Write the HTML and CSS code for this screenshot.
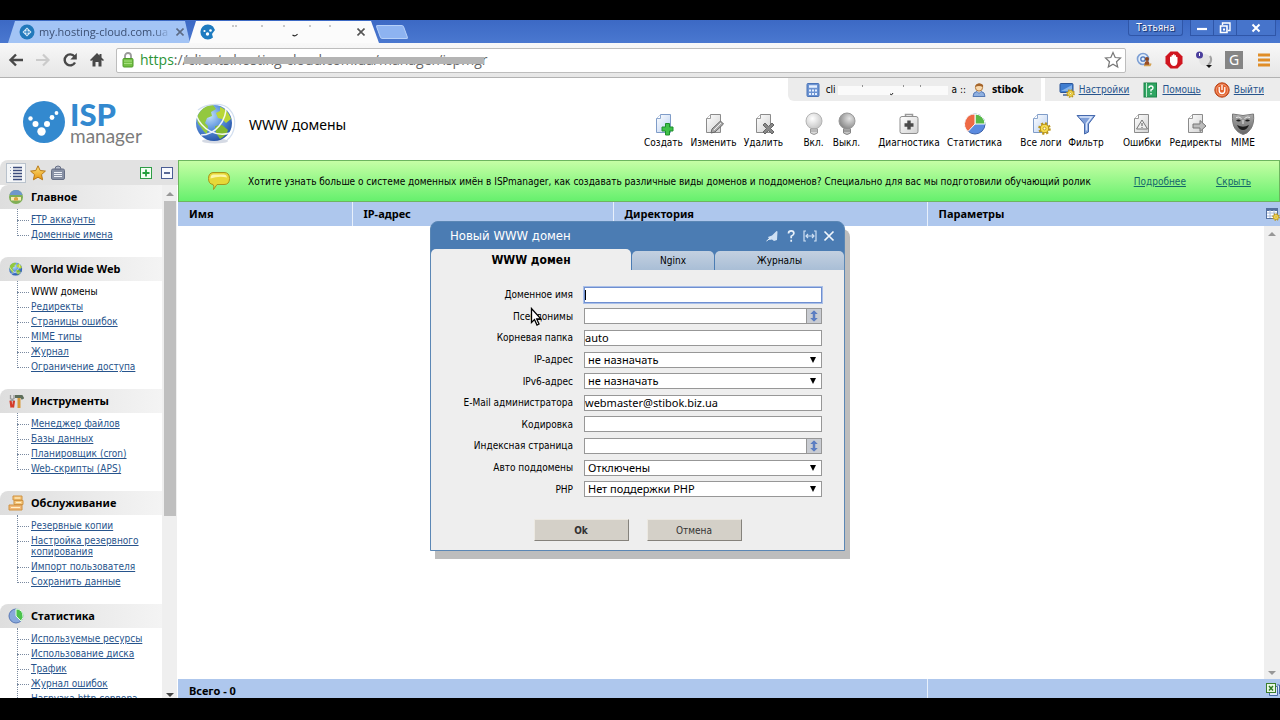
FILE: index.html
```html
<!DOCTYPE html>
<html lang="ru">
<head>
<meta charset="utf-8">
<title>ISPmanager — WWW домены</title>
<link rel="stylesheet" href="styles.css">
</head>
<body>
<svg class="defs" aria-hidden="true">
  <defs>
    <linearGradient id="gPage" x1="0" y1="0" x2="1" y2="1"><stop offset="0" stop-color="#fff"/><stop offset="1" stop-color="#d2d2d2"/></linearGradient>
    <linearGradient id="gPageBlue" x1="0" y1="0" x2="1" y2="1"><stop offset="0" stop-color="#fff"/><stop offset="1" stop-color="#b9cff0"/></linearGradient>
    <radialGradient id="gGlobe" cx=".38" cy=".3" r=".75"><stop offset="0" stop-color="#c4e2fa"/><stop offset=".5" stop-color="#5b92dd"/><stop offset="1" stop-color="#2350a4"/></radialGradient>
    <radialGradient id="gOn" cx=".4" cy=".35" r=".7"><stop offset="0" stop-color="#fff"/><stop offset="1" stop-color="#c2c2c2"/></radialGradient>
    <radialGradient id="gOff" cx=".65" cy=".35" r=".8"><stop offset="0" stop-color="#e4e4e4"/><stop offset="1" stop-color="#777"/></radialGradient>
    <linearGradient id="gMask" x1="0" y1="0" x2="0" y2="1"><stop offset="0" stop-color="#aaa"/><stop offset="1" stop-color="#666"/></linearGradient>
    <linearGradient id="gGold" x1="0" y1="0" x2="0" y2="1"><stop offset="0" stop-color="#fbe27c"/><stop offset="1" stop-color="#e8960f"/></linearGradient>
    <symbol id="page" viewBox="0 0 24 24"><path d="M4.500 6.500l4-4h10v18h-14z" fill="url(#gPage)" stroke="#8b8b8b"/><path d="M8.500 2.500v4h-4" fill="#fff" stroke="#9a9a9a"/></symbol>
    <symbol id="pageBlue" viewBox="0 0 24 24"><path d="M4.500 6.500l4-4h10v18h-14z" fill="url(#gPageBlue)" stroke="#7f9cc8"/><path d="M8.500 2.500v4h-4" fill="#fff" stroke="#8ea8cf"/></symbol>
    <symbol id="gear" viewBox="0 0 12 12"><circle cx="6" cy="6" r="4.600" fill="none" stroke="#b9941b" stroke-width="2.400" stroke-dasharray="1.900 1.700"/><circle cx="6" cy="6" r="3.900" fill="#f6dc50" stroke="#b9941b"/><circle cx="6" cy="6" r="1.300" fill="#fffbe0" stroke="#b9941b" stroke-width=".8"/></symbol>
    <symbol id="globe" viewBox="0 0 44 44"><ellipse cx="22" cy="40" rx="13" ry="2.500" fill="#d5dae4"/><circle cx="21" cy="22" r="18" fill="url(#gGlobe)"/><path d="M5 14c4-7 9-10 15-10l3 4-5 3 1 4-5 2-2 5 3 3-1 8c-3-1-5-6-8-9-2-2-2-6-1-10z" fill="#93c83f"/><path d="M27 6c6 2 9 6 11 12l-5 4-4-4-4-1-2-5 4-2z" fill="#b9d636"/><path d="M22 25l7-1 6 5c-1 4-4 7-8 9l-4-6z" fill="#83b930"/><path d="M3 14c6 15 20 22 34 18M8 34C22 34 34 20 33 4" fill="none" stroke="#fff" stroke-width="1.500" opacity=".9"/><path d="M5 9C14 2 31 1 37 9c8 9 5 24-3 30" fill="none" stroke="#d3dff0" stroke-width="1.200"/></symbol>
    <symbol id="multi" viewBox="0 0 12 14"><path d="M6 0l4.500 4.500H7.500v5h3L6 14 1.500 9.500h3v-5h-3z" fill="#5d7ec2"/></symbol>
  </defs>
</svg>

<div class="screen">
  <header class="browser">
    <div class="tabstrip">
      <div class="btab">
        <svg class="i16" viewBox="0 0 16 16"><circle cx="8" cy="8" r="7.500" fill="#2179bb"/><path d="M8 3.500l4.500 4.500L8 12.500 3.500 8z" fill="#d9ecfa"/><path d="M8 5v6M5 8h6" stroke="#2179bb"/></svg>
        <span class="btab-title">my.hosting-cloud.com.ua</span>
        <button class="btab-close" aria-label="Закрыть вкладку"><svg viewBox="0 0 8 8"><path d="M.5.5l7 7m0-7l-7 7" stroke="#5c6b85" stroke-width="1.600"/></svg></button>
      </div>
      <div class="btab btab-active">
        <svg class="i16" viewBox="0 0 16 16"><path d="M13 2.500A7.500 7.500 0 1 0 13 13.500L12 10l3-4z" fill="#1f7cc0"/><circle cx="4.500" cy="7" r="1.100" fill="#fff"/><circle cx="7.500" cy="10" r="1.700" fill="#fff"/><circle cx="10.500" cy="6.500" r="1.300" fill="#fff"/></svg>
        <svg class="specks" viewBox="0 0 110 16"><path d="M1 2h1M4 2h1M30 2h1M52 2h1M78 2h1M98 2h1" stroke="#333"/><path d="M61 11q3 2 5-1" stroke="#222" fill="none" stroke-width="1.200"/></svg>
        <button class="btab-close" aria-label="Закрыть вкладку"><svg viewBox="0 0 8 8"><path d="M.5.5l7 7m0-7l-7 7" stroke="#555" stroke-width="1.600"/></svg></button>
      </div>
      <button class="newtab" aria-label="Новая вкладка"></button>
      <div class="winbtns">
        <button class="user">Татьяна</button>
        <div class="wingroup">
          <button aria-label="Свернуть"><svg viewBox="0 0 12 12"><path d="M1 7h10" stroke="#fff" stroke-width="2.200"/></svg></button>
          <button aria-label="Развернуть"><svg viewBox="0 0 12 12"><path d="M3.500 3V1h7.500v7.500H9" fill="none" stroke="#fff" stroke-width="1.400"/><path d="M1.500 4h6.500v6.500H1.500z" fill="none" stroke="#fff" stroke-width="1.600"/><path d="M4 6.500h2v2H4z" fill="#fff"/></svg></button>
          <button class="wide" aria-label="Закрыть"><svg viewBox="0 0 12 12"><path d="M2.500 2.500l7 7m0-7l-7 7" stroke="#fff" stroke-width="2"/></svg></button>
        </div>
      </div>
    </div>
    <div class="toolbar">
      <button class="tb" aria-label="Назад"><svg viewBox="0 0 16 16"><path d="M15 8H3M8 2.500L2.500 8 8 13.500" fill="none" stroke="#484848" stroke-width="2.400"/></svg></button>
      <button class="tb" aria-label="Вперёд"><svg viewBox="0 0 16 16"><path d="M1 8h12M8 2.500L13.500 8 8 13.500" fill="none" stroke="#cbcbcb" stroke-width="2.200"/></svg></button>
      <button class="tb" aria-label="Обновить"><svg viewBox="0 0 16 16"><path d="M13 10.500A5.500 5.500 0 1 1 12.500 4.500" fill="none" stroke="#484848" stroke-width="2.400"/><path d="M14.800 1v6.500H8.300z" fill="#484848"/></svg></button>
      <button class="tb" aria-label="Домой"><svg viewBox="0 0 16 16"><path d="M8 1L1 8l1 1 1.500-1v6.500h3V10h3v4.500h3V8L14 9l1-1-2.500-2.500V2h-2v1.500z" fill="#484848"/></svg></button>
      <div class="omnibox">
        <svg class="lock" viewBox="0 0 12 16"><path d="M3 7V4a3 3 0 0 1 6 0v3" fill="none" stroke="#9a9a9a" stroke-width="1.800"/><rect x="1" y="6.500" width="10" height="8.500" rx="1" fill="#74c045" stroke="#4f9b2b"/><path d="M2 9h8M2 11.500h8" stroke="#a5df7e"/></svg>
        <span class="scheme">https</span><input class="url" aria-label="Адрес" value="://clients.hosting-cloud.com.ua/manager/ispmgr">
        <span class="strike"></span>
        <svg class="star" viewBox="0 0 18 18"><path d="M9 1.500l2.200 5 5.300.5-4 3.700 1.200 5.300L9 13.200 4.300 16l1.200-5.300-4-3.700 5.300-.5z" fill="#fff" stroke="#777" stroke-width="1.200"/></svg>
      </div>
      <div class="exts">
        <svg viewBox="0 0 18 18"><circle cx="8" cy="8" r="5.500" fill="#e5effa" stroke="#7d9fd4" stroke-width="1.600"/><circle cx="8" cy="8" r="2.200" fill="none" stroke="#4d77bd" stroke-width="1.300"/><circle cx="12" cy="8" r="2" fill="#8a4520"/><path d="M9.500 14q0-4 2.500-4t2.500 4z" fill="#9b4d22"/><path d="M9 14.500h6l1-2" stroke="#d4a050" stroke-width="1.500" fill="none"/></svg>
        <svg viewBox="0 0 18 18"><path d="M5.500.5h7l5 5v7l-5 5h-7l-5-5v-7z" fill="#d0151f"/><path d="M5 9V6q1-1 1.500 0V4.500q1-1 1.500 0V3.500q1-1 1.500 0v1q1-1 1.500 0v1.500q1.500-.5 1.500.5V11q-.5 4-3.500 4T5 11z" fill="#fff"/></svg>
        <svg viewBox="0 0 18 18"><circle cx="10" cy="9" r="6" fill="#e3e3e3"/><path d="M15 5q3 5-2 9" stroke="#a3a3a3" stroke-width="2" fill="none"/><circle cx="4.500" cy="4" r="3.500" fill="#4b3f9d"/><path d="M4.500 2v3" stroke="#fff"/><path d="M11 14h6l-3 3z" fill="#111"/></svg>
        <span class="gext">G</span>
        <svg viewBox="0 0 18 18"><path d="M3 4h12M3 9h12M3 14h12" stroke="#e08d27" stroke-width="3"/></svg>
      </div>
    </div>
  </header>

  <div class="app">
    <div class="userbar">
      <div class="ubox ubox-user">
        <svg class="i14" viewBox="0 0 14 14"><rect x="1" y=".5" width="12" height="13" rx="1" fill="#6d94d2" stroke="#4a74b8"/><path d="M3 3.500h8" stroke="#e6f0ff" stroke-width="2.500"/><path d="M3 7.500h8M3 11h8" stroke="#e6f0ff" stroke-width="1.800" stroke-dasharray="2 1"/></svg>
        <span>cli</span>
        <svg class="redact" viewBox="0 0 112 14"><path d="M0 3h110v9H0z" fill="#fafafa"/><path d="M24 3h1M65 3h1M82 3h1" stroke="#333"/><path d="M52 11q2 2 3-1" stroke="#222" fill="none"/></svg>
        <span>a ::</span>
        <svg class="i14" viewBox="0 0 14 14"><circle cx="7" cy="4.500" r="3.600" fill="#f8d9ae" stroke="#b47a3b"/><path d="M3 4q1-4 5-3.500T11 4Q7 2 3 4z" fill="#a5652a"/><path d="M1 13.500q0-4.500 4-5l2 2 2-2q4 .5 4 5z" fill="#8fb0e0" stroke="#5579b5"/></svg>
        <b>stibok</b>
      </div>
      <nav class="ubox ubox-links">
        <a href="#"><svg class="i16" viewBox="0 0 16 16"><rect x="1" y="1.500" width="13" height="9" rx="1" fill="#3f7dd0" stroke="#2c5596"/><path d="M2 9L13 3v6z" fill="#83b2ea"/><path d="M4 13h6" stroke="#6e86ad" stroke-width="2"/><use href="#gear" x="7" y="7" width="9" height="9"/></svg><span>Настройки</span></a>
        <a href="#"><svg class="i16" viewBox="0 0 16 16"><rect x="2" y="1" width="12.500" height="14" fill="#2fa562" stroke="#1c8348"/><path d="M4.500 1v14" stroke="#bfead0"/><path d="M7 6q0-2 2-2t2 2q0 1.200-2 2v1.500M9 11v1.500" stroke="#fff" stroke-width="1.400" fill="none"/></svg><span>Помощь</span></a>
        <a href="#"><svg class="i16" viewBox="0 0 16 16"><circle cx="8" cy="8" r="7.200" fill="#e3612d" stroke="#b5451c"/><circle cx="8" cy="8" r="5.700" fill="none" stroke="#f3a27d" stroke-width=".8"/><path d="M5.200 5v3.500q0 3 2.800 3t2.800-3V5M8 3v5" stroke="#fff" stroke-width="1.300" fill="none"/></svg><span>Выйти</span></a>
      </nav>
    </div>

    <div class="masthead">
      <div class="logo">
        <svg viewBox="0 0 42 42"><circle cx="21" cy="21" r="21" fill="#3389cf"/><g fill="#fff"><circle cx="7.500" cy="17.500" r="2.200"/><circle cx="12.500" cy="23" r="3"/><circle cx="18.500" cy="30.500" r="4.200"/><circle cx="24" cy="23" r="3"/><circle cx="29" cy="16.500" r="2.400"/><circle cx="33.500" cy="12" r="1.900"/></g></svg>
        <div class="logo-text"><b>ISP</b><span>manager</span></div>
      </div>
      <svg class="bigglobe"><use href="#globe"/></svg>
      <h1>WWW домены</h1>
      <div class="actions">
        <div class="agroup g1">
          <button><svg viewBox="0 0 24 24"><use href="#pageBlue"/><path d="M13.500 11.500h4v3.500H21v4h-3.500V23h-4v-4H10v-4h3.500z" fill="#3fc148" stroke="#1e8f2c"/></svg>Создать</button>
          <button><svg viewBox="0 0 24 24"><use href="#page"/><path d="M9 21l1-4 8.500-8 3 3-8.500 8z" fill="#aaa" stroke="#666"/><path d="M12 18l7-7" stroke="#eee"/></svg>Изменить</button>
          <button><svg viewBox="0 0 24 24"><use href="#page"/><path d="M11 13l2-2 3.500 3.500L20 11l2 2-3.500 3.500L22 20l-2 2-3.500-3.500L13 22l-2-2 3.500-3.500z" fill="#888" stroke="#666"/></svg>Удалить</button>
        </div>
        <div class="agroup g2">
          <button><svg viewBox="0 0 24 24"><circle cx="12" cy="9" r="8" fill="url(#gOn)" stroke="#b4b4b4"/><path d="M8.500 17h7v4q-3.500 3-7 0z" fill="#d9d9d9" stroke="#9a9a9a"/><path d="M8.500 19h7" stroke="#9a9a9a"/></svg>Вкл.</button>
          <button><svg viewBox="0 0 24 24"><circle cx="12" cy="9" r="8" fill="url(#gOff)" stroke="#999"/><path d="M8.500 17h7v4q-3.500 3-7 0z" fill="#c4c4c4" stroke="#888"/><path d="M8.500 19h7" stroke="#777"/></svg>Выкл.</button>
        </div>
        <div class="agroup g3">
          <button><svg viewBox="0 0 24 24"><path d="M8.500 5V2.500h7V5" fill="none" stroke="#9a9a9a" stroke-width="1.500"/><rect x="3" y="4.500" width="18" height="17" rx="2" fill="url(#gPage)" stroke="#8f8f8f"/><path d="M12 8.500v9M7.500 13h9" stroke="#4a4a4a" stroke-width="3.400"/></svg>Диагностика</button>
          <button><svg viewBox="0 0 24 24"><circle cx="12" cy="12" r="10" fill="#5b8be0" stroke="#3c61a8"/><path d="M12 12V2a10 10 0 0 1 10 10z" fill="#58b947" stroke="#fff"/><path d="M12 12L5 19.500A10 10 0 0 1 12 2z" fill="#ee6a45" stroke="#fff"/></svg>Статистика</button>
        </div>
        <div class="agroup g4">
          <button><svg viewBox="0 0 24 24"><use href="#pageBlue"/><use href="#gear" x="9" y="10" width="13" height="13"/></svg>Все логи</button>
          <button><svg viewBox="0 0 24 24"><path d="M3 3.500h18l-6.500 8.500v8l-4 2V12z" fill="#7f9fd8" stroke="#4669ad"/><path d="M5.500 5h12l-5 6.500v7" fill="none" stroke="#dbe7fb" stroke-width="1.500"/></svg>Фильтр</button>
        </div>
        <div class="agroup g5">
          <button><svg viewBox="0 0 24 24"><use href="#page"/><path d="M12 8l5.500 9h-11z" fill="#eee" stroke="#777"/><path d="M12 11v3M12 15v1" stroke="#555"/></svg>Ошибки</button>
          <button><svg viewBox="0 0 24 24"><use href="#page"/><path d="M9 12h7V8.500l6 5.500-6 5.500V16H9z" fill="#bcbcbc" stroke="#777"/></svg>Редиректы</button>
          <button><svg viewBox="0 0 24 24"><path d="M1.500 2q10.500 3 21 0 1 9-2.500 14.500T12 22.500Q7 21 4 16.500T1.500 2z" fill="url(#gMask)" stroke="#777"/><path d="M5 8.500q3-2 5 .5-3 1-5-.5zM19 8.500q-3-2-5 .5 3 1 5-.5zM6 13q6 3.500 12 0-2 5-6 5t-6-5z" fill="#1d1d1d"/><path d="M5 5.500q3-1.500 5.500 1M19 5.500q-3-1.500-5.500 1M12 8v4" stroke="#e8e8e8" fill="none"/></svg>MIME</button>
        </div>
      </div>
    </div>

    <div class="body">
      <aside class="sidebar">
        <div class="sidetools">
          <button class="pressed" aria-label="Список"><svg class="i16" viewBox="0 0 16 16"><path d="M5 2.500h9M5 5.500h9M5 8.500h9M5 11.500h9M5 14.500h9" stroke="#3c4c7c" stroke-width="1.300"/><path d="M2 2.500h1M2 5.500h1M2 8.500h1M2 11.500h1" stroke="#8b9bbd"/></svg></button>
          <button aria-label="Избранное"><svg class="i16" viewBox="0 0 16 16"><path d="M8 .8l2.200 4.700 5.200.6-3.900 3.500 1.100 5.200L8 12.200l-4.600 2.600 1.100-5.200L.6 6.100l5.200-.6z" fill="url(#gGold)" stroke="#b97917"/></svg></button>
          <button aria-label="Задачи"><svg class="i16" viewBox="0 0 16 16"><rect x="1.500" y="4" width="13" height="10.500" rx="1.500" fill="#8790a4" stroke="#666f85"/><path d="M4 7.500h8M4 9.500h8M4 11.500h8" stroke="#eef1f7"/><path d="M5 4q0-3 3-3t3 3z" fill="#b9c0cf" stroke="#666f85"/></svg></button>
          <span class="push"></span>
          <button class="box plus" aria-label="Развернуть все"><svg viewBox="0 0 12 12"><rect x=".5" y=".5" width="11" height="11" fill="#f3fff3" stroke="#2e9c45"/><path d="M6 2.500v7M2.500 6h7" stroke="#23a03c" stroke-width="1.800"/></svg></button>
          <button class="box" aria-label="Свернуть все"><svg viewBox="0 0 12 12"><rect x=".5" y=".5" width="11" height="11" fill="#f8faff" stroke="#4a5d94"/><path d="M3 6h6" stroke="#33467d" stroke-width="1.600"/></svg></button>
        </div>
        <div class="sidescroll">
          <nav class="menu">
            <section>
              <h2><svg class="i16" viewBox="0 0 16 16"><circle cx="8" cy="8" r="7" fill="#7fae55"/><path d="M1.500 6Q3 1 8 1t6.500 5z" fill="#6f97cc"/><path d="M3 8h10v3.500H3z" fill="#f7ebb4"/><path d="M6 9q2-2 4 0v2.500H6z" fill="#d9a441"/></svg>Главное</h2>
              <ul><li><a href="#">FTP аккаунты</a></li><li><a href="#">Доменные имена</a></li></ul>
            </section>
            <section>
              <h2><svg class="i16"><use href="#globe"/></svg>World Wide Web</h2>
              <ul><li>WWW домены</li><li><a href="#">Редиректы</a></li><li><a href="#">Страницы ошибок</a></li><li><a href="#">MIME типы</a></li><li><a href="#">Журнал</a></li><li><a href="#">Ограничение доступа</a></li></ul>
            </section>
            <section>
              <h2><svg class="i16" viewBox="0 0 16 16"><path d="M2.500 7.500l1 7M6 7.500l-1 7" stroke="#d43b28" stroke-width="2.200"/><path d="M2.500 2v3.500l3.500 2M6 2v3.500l-3.500 2" stroke="#999" stroke-width="1.300" fill="none"/><path d="M11 5v10" stroke="#d89a3c" stroke-width="3"/><path d="M7 3.500h6.500l1.500 2.500" stroke="#5d6e5a" stroke-width="3" fill="none"/></svg>Инструменты</h2>
              <ul><li><a href="#">Менеджер файлов</a></li><li><a href="#">Базы данных</a></li><li><a href="#">Планировщик (cron)</a></li><li><a href="#">Web-скрипты (APS)</a></li></ul>
            </section>
            <section>
              <h2><svg class="i16" viewBox="0 0 16 16"><path d="M5 1h9v4H5zM6 5.500h9v4H6z" fill="#f6c77c" stroke="#cf9240"/><path d="M1 10h13v5H1z" fill="#f2b878" stroke="#cf9240"/><path d="M7 3h5M8 7.500h5M3 12.500h9" stroke="#fff0c8"/></svg>Обслуживание</h2>
              <ul><li><a href="#">Резервные копии</a></li><li class="two"><a href="#">Настройка резервного<br>копирования</a></li><li><a href="#">Импорт пользователя</a></li><li><a href="#">Сохранить данные</a></li></ul>
            </section>
            <section>
              <h2><svg class="i16" viewBox="0 0 16 16"><circle cx="8" cy="8" r="7" fill="#88a9dc" stroke="#5877b4"/><path d="M8 8V1a7 7 0 0 1 5 12z" fill="#4cc24c" stroke="#e6ffe6"/></svg>Статистика</h2>
              <ul><li><a href="#">Используемые ресурсы</a></li><li><a href="#">Использование диска</a></li><li><a href="#">Трафик</a></li><li><a href="#">Журнал ошибок</a></li><li><a href="#">Нагрузка http-сервера</a></li></ul>
            </section>
          </nav>
          <div class="vbar dark"><i class="up"></i><span class="thumb"></span><i class="down"></i></div>
        </div>
      </aside>

      <main>
        <div class="banner">
          <svg viewBox="0 0 24 20"><path d="M6 1.500h11q5.500 0 5.500 6t-5.500 6H10L6.500 18.500q1-3-.5-5-4.500-.5-4.500-6T6 1.500z" fill="#e6d838" stroke="#a8961c"/><path d="M6.500 3.500h10q3 0 3.500 3-8-2-16.500 1 0-4 3-4z" fill="#fbf6a6"/></svg>
          <p>Хотите узнать больше о системе доменных имён в ISPmanager, как создавать различные виды доменов и поддоменов? Специально для вас мы подготовили обучающий ролик</p>
          <a href="#">Подробнее</a>
          <a href="#">Скрыть</a>
        </div>
        <table class="cols">
          <colgroup><col class="c1"><col class="c2"><col class="c3"><col></colgroup>
          <thead><tr><th>Имя</th><th>IP-адрес</th><th>Директория</th><th><div class="withicon">Параметры<svg class="i14" viewBox="0 0 14 14"><rect x=".5" y="1.500" width="11" height="10" fill="#fff" stroke="#54709f"/><path d="M.5 3h11" stroke="#54709f" stroke-width="2"/><path d="M4 3v8M8 3v8M1 6h10M1 9h10" stroke="#a9bcdc"/><use href="#gear" x="6" y="6" width="8" height="8"/></svg></div></th></tr></thead>
        </table>
        <div class="rows"><div class="vbar"><i class="up"></i><span class="push"></span><i class="down"></i></div></div>
        <div class="total"><b>Всего - 0</b><span class="split"><svg class="i14" viewBox="0 0 14 14"><path d="M3.500 4.500h8v9h-8zM11 3h2.500v9" fill="#dfe8f8" stroke="#486ba8"/><rect x=".5" y="1.500" width="9" height="9" fill="#e9f7e2" stroke="#3b7d2b"/><path d="M3 4l4 4.500M7 4L3 8.500" stroke="#2f7a22" stroke-width="1.500"/></svg></span></div>
      </main>
    </div>
  </div>
</div>

<form class="dialog">
  <div class="dtitle"><span>Новый WWW домен</span>
    <button type="button" aria-label="Закрепить"><svg viewBox="0 0 14 14"><path d="M3 8l4-1.500L11.500 2l1 .5-.5 8.500-3 1-2-1.500-2.500.5z" fill="#cfe0f3"/><path d="M1.500 12l4-3" stroke="#e8f1fa"/></svg></button>
    <button type="button" aria-label="Справка"><svg viewBox="0 0 14 14"><path d="M4.500 4.500q0-2.700 2.700-2.700t2.700 2.500q0 1.700-2.700 3v1.900M7.200 10.700v2" fill="none" stroke="#e8f1fa" stroke-width="1.700"/></svg></button>
    <button type="button" aria-label="Ширина"><svg viewBox="0 0 14 14"><path d="M3 2H1v10h2M11 2h2v10h-2M3 7h8M5 5L3 7l2 2M9 5l2 2-2 2" fill="none" stroke="#cfe0f3" stroke-width="1.200"/></svg></button>
    <button type="button" aria-label="Закрыть"><svg viewBox="0 0 14 14"><path d="M2.500 2.500l9 9m0-9l-9 9" stroke="#f0f6fc" stroke-width="1.700"/></svg></button>
  </div>
  <div class="dtabs"><button type="button" class="on">WWW домен</button><button type="button">Nginx</button><button type="button">Журналы</button></div>
  <div class="dbody">
    <div class="fields">
      <label for="f1">Доменное имя</label><div class="fld"><input id="f1" class="focus"><i class="caret"></i></div>
      <label for="f2">Псевдонимы</label><div class="fld"><input id="f2"><button type="button" aria-label="Список"><svg viewBox="0 0 12 14"><use href="#multi"/></svg></button></div>
      <label for="f3">Корневая папка</label><div class="fld"><input id="f3" value="auto"></div>
      <label for="f4">IP-адрес</label><div class="fld sel"><select id="f4"><option>не назначать</option></select></div>
      <label for="f5">IPv6-адрес</label><div class="fld sel"><select id="f5"><option>не назначать</option></select></div>
      <label for="f6">E-Mail администратора</label><div class="fld"><input id="f6" value="webmaster@stibok.biz.ua"></div>
      <label for="f7">Кодировка</label><div class="fld"><input id="f7"></div>
      <label for="f8">Индексная страница</label><div class="fld"><input id="f8"><button type="button" aria-label="Список"><svg viewBox="0 0 12 14"><use href="#multi"/></svg></button></div>
      <label for="f9">Авто поддомены</label><div class="fld sel"><select id="f9"><option>Отключены</option></select></div>
      <label for="f10">PHP</label><div class="fld sel"><select id="f10"><option>Нет поддержки PHP</option></select></div>
    </div>
    <div class="dbtns"><button type="submit" class="ok">Ok</button><button type="button">Отмена</button></div>
  </div>
</form>
<svg class="cursor" viewBox="0 0 12 20"><path d="M1.500 1.500v14l3-3 2.500 5.500 2-1-2.300-5H11z" fill="#fff" stroke="#000" stroke-width="1.300"/></svg>
</body>
</html>
```
FILE: styles.css
```css
* { box-sizing: border-box; }
body {
  margin: 0;
  background: #000;
  color: #000;
  font: 10px/15px "DejaVu Sans Condensed", "DejaVu Sans", sans-serif;
}
button { font: inherit; color: inherit; border: 0; padding: 0; background: none; }
svg { display: block; flex: none; }
h1, h2, p, ul { margin: 0; padding: 0; }
a { color: #27548c; }
.defs { position: absolute; width: 0; height: 0; }
.i16 { width: 16px; height: 16px; }
.i14 { width: 14px; height: 14px; }
.push { flex: 1; }

.screen { display: flex; flex-direction: column; height: 100vh; padding: 20px 0 22px; }

/* browser window */
.tabstrip { display: flex; align-items: flex-start; height: 23px; padding: 1px 0 0 8px; background: linear-gradient(#3c69c4, #4a78d0); }
.btab {
  display: flex; align-items: center; gap: 4px;
  width: 182px; height: 22px; padding: 0 6px 0 11px; margin-right: -1px;
  background: #a3c4f5;
  clip-path: polygon(7px 0, 177px 0, 100% 100%, 0 100%);
  color: #3b4f73;
  font: 11px/20px "Open Sans", sans-serif;
}
.btab-active { width: 190px; background: #fbfbfb; clip-path: polygon(7px 0, 182px 0, 100% 100%, 0 100%); padding-right: 14px; }
.btab-title { flex: 1; overflow: hidden; white-space: nowrap; -webkit-mask: linear-gradient(90deg, #000 85%, transparent); }
.specks { flex: 1; height: 16px; }
.btab-close { width: 8px; height: 8px; }
.newtab { width: 28px; height: 14px; margin: 4px 0 0; background: #8db3f1; border: 1px solid #b6d0f8; border-radius: 2px; transform: skewX(20deg); }
.winbtns { display: flex; gap: 7px; margin: -1px 5px 0 auto; }
.winbtns button { border: 1px solid #2f56a8; border-top: 0; background: #4674cb; color: #fff; height: 16px; }
.user { width: 55px; border-radius: 0 0 3px 3px; font: 10px/14px "DejaVu Sans Condensed", sans-serif; text-shadow: 1px 1px 1px #0a245f; }
.wingroup { display: flex; }
.wingroup button { display: flex; justify-content: center; align-items: center; width: 24px; margin-right: -1px; }
.wingroup .wide { width: 40px; }
.wingroup svg { width: 12px; height: 12px; }
.toolbar { display: flex; align-items: center; height: 35px; padding: 0 7px 0 8px; background: linear-gradient(#f8f8f8, #e6e6e6); border-bottom: 1px solid #b2b2b2; }
.tb { width: 27px; display: flex; padding-left: 0; }
.tb svg { width: 16px; height: 16px; }
.omnibox { position: relative; flex: 1; display: flex; align-items: center; height: 25px; padding: 0 6px 0 5px; background: #fff; border: 1px solid #bdbdbd; border-radius: 2px; font: 14px/22px "Open Sans", sans-serif; }
.lock { width: 12px; height: 16px; margin-right: 6px; }
.scheme { color: #2b9436; }
.url { flex: 1; min-width: 0; border: 0; padding: 0; background: none; outline: 0; font: inherit; color: #666; }
.strike { position: absolute; left: 67px; width: 300px; top: 8px; height: 7px; background: #b4b4b4; }
.star { width: 18px; height: 18px; margin-right: -3px; }
.exts { display: flex; align-items: center; gap: 12px; padding: 0 0 0 9px; }
.exts svg { width: 18px; height: 18px; }
.gext { width: 18px; height: 18px; background: #858585; color: #fff; text-align: center; font: 14px/18px "Noto Sans", sans-serif; }

/* application */
.app { flex: 1; min-height: 0; display: flex; flex-direction: column; background: #fff; }
.userbar { display: flex; justify-content: flex-end; gap: 4px; height: 23px; }
.ubox { display: flex; align-items: center; height: 23px; background: #ececec; }
.ubox-user { width: 253px; padding-left: 18px; gap: 6px; border-radius: 0 0 0 6px; }
.redact { width: 112px; height: 14px; margin: 0 -4px; }
.ubox-links { gap: 13px; padding: 0 16px 0 14px; }
.ubox-links a { display: flex; align-items: center; gap: 4px; }
.masthead { display: flex; height: 59px; padding-left: 23px; align-items: flex-start; }
.logo { display: flex; gap: 5px; width: 169px; }
.logo svg { width: 42px; height: 42px; }
.logo-text { display: flex; flex-direction: column; }
.logo-text b { color: #3389cf; font: 900 31px/26px Lato, sans-serif; }
.logo-text span { color: #7c7c7c; font: 19px/18px Lato, sans-serif; }
.bigglobe { width: 46px; height: 44px; }
h1 { margin: 14px 0 0 11px; font: 14px/20px "Noto Sans", sans-serif; }
.actions { margin: 11px 20px 0 auto; display: flex; }
.agroup { display: grid; }
.agroup button { display: flex; flex-direction: column; align-items: center; white-space: nowrap; line-height: 14px; }
.agroup svg { width: 24px; height: 24px; }
.g1 { grid-template-columns: 47px 53px 47px; }
.g2 { grid-template-columns: 29px 37px; margin-left: 12px; }
.g3 { grid-template-columns: 68px 63px; margin-left: 10px; }
.g4 { grid-template-columns: 48px 42px; margin-left: 11px; }
.g5 { grid-template-columns: 46px 61px 34px; margin-left: 12px; }
.body { flex: 1; min-height: 0; display: flex; }

/* sidebar */
.sidebar { width: 178px; display: flex; flex-direction: column; }
.sidetools { display: flex; align-items: center; height: 25px; padding: 0 5px 0 6px; gap: 4px; background: #e2e2e2; border-radius: 8px 0 0 0; }
.sidetools button { display: flex; }
.sidetools .pressed { border: 1px solid #b9c2cc; background: #f4f6f8; padding: 1px; }
.sidetools .box { width: 12px; height: 12px; }
.sidetools .plus { margin-right: 5px; }
.sidescroll { flex: 1; min-height: 0; display: flex; }
.menu { flex: 1; overflow: hidden; }
.menu section { margin-bottom: 15px; }
.menu h2 { display: flex; align-items: center; gap: 7px; height: 24px; padding-left: 8px; background: linear-gradient(90deg, #dedede, #f4f4f4); border-radius: 8px 0 0 0; font: bold 11px/24px "Noto Sans", sans-serif; }
.menu ul { position: relative; list-style: none; padding: 3px 0 0 31px; }
.menu ul::before { content: ""; position: absolute; left: 17px; top: 0; bottom: 6px; border-left: 1px dotted #7a8aa0; }
.menu li { position: relative; height: 15px; white-space: nowrap; }
.menu li::before { content: ""; position: absolute; left: -14px; width: 12px; top: 8px; border-top: 1px dotted #7a8aa0; }
.menu .two { height: 26px; line-height: 11px; padding-top: 2px; }
.vbar { width: 16px; display: flex; flex-direction: column; align-items: center; background: #efefef; padding: 6px 0 4px; }
.dark { width: 15px; padding: 7px 2px 1px; margin-right: 1px; }
.thumb { width: 12px; height: 315px; margin: 5px 0 auto; background: #bfbfbf; }
.up, .down { border: 4px solid transparent; border-top: 0; border-bottom: 4px solid #979797; }
.down { border-bottom: 0; border-top: 4px solid #979797; }
.dark .down { border-top-color: #444; }

/* list area */
main { flex: 1; min-width: 0; display: flex; flex-direction: column; }
.banner { display: flex; align-items: center; height: 42px; padding: 0 28px; border: 1px solid #6db55f; background: linear-gradient(#c6fea5, #66f06d); }
.banner svg { width: 24px; height: 20px; margin-right: 17px; }
.banner p { flex: 1; white-space: nowrap; }
.banner a { margin-left: 30px; color: #14686a; }
.cols { width: 100%; table-layout: fixed; border-collapse: collapse; }
.cols th { height: 24px; padding: 0 0 0 11px; text-align: left; background: #aec7ed; border-right: 1px solid #e8f0fb; font: bold 11px/16px "Noto Sans", sans-serif; }
.cols th:last-child { border-right: 0; }
.c1 { width: 174px; }
.c2 { width: 261px; }
.c3 { width: 314px; }
.withicon { display: flex; justify-content: space-between; align-items: center; }
.rows { flex: 1; display: flex; justify-content: flex-end; }
.total { display: flex; height: 19px; padding-left: 11px; background: #aec7ed; font: 11px/24px "Noto Sans", sans-serif; }
.total b { width: 738px; }
.split { flex: 1; display: flex; justify-content: flex-end; align-items: center; border-left: 1px solid #e8f0fb; }

/* dialog */
.dialog { position: absolute; left: 430px; top: 221px; width: 415px; background: #4b7cb3; border: 1px solid #5b87b5; border-radius: 8px 8px 0 0; box-shadow: 5px 8px 0 #bdbdbd; }
.dtitle { display: flex; align-items: center; gap: 5px; height: 27px; padding: 0 8px 0 19px; color: #fff; font: 13px/26px "DejaVu Sans Condensed", sans-serif; }
.dtitle span { flex: 1; }
.dtitle svg { width: 14px; height: 14px; }
.dtabs { display: grid; grid-template-columns: 200px 82px 1fr; gap: 1px; align-items: end; }
.dtabs button { height: 19px; background: linear-gradient(#c3d0e0, #a9bed6); border-radius: 5px 5px 0 0; }
.dtabs .on { height: 21px; background: #eee; font: bold 12px/20px "DejaVu Sans Condensed", sans-serif; }
.dbody { background: #eee; padding: 14px 22px 9px; }
.fields { display: grid; grid-template-columns: 120px 238px; grid-template-rows: repeat(10, 1fr); column-gap: 11px; height: 216px; align-items: center; }
.fields label { text-align: right; white-space: nowrap; }
.fld { position: relative; display: flex; height: 16px; background: #fff; border: 1px solid #979797; }
.fld input, .fld select { flex: 1; min-width: 0; border: 0; padding: 0; margin: 0; background: none; outline: 0; appearance: none; color: #000; border-radius: 0; font: 11px/14px "Noto Sans", sans-serif; }
.fld select { padding-left: 3px; }
.fld:has(.focus) { border-color: #6f8fd0; box-shadow: 0 0 0 1px #a9bfe8; }
.caret { position: absolute; left: 0; top: 2px; width: 1px; height: 10px; background: #000; }
.fld button { width: 15px; border-left: 1px solid #979797; background: #c9ccd2; display: flex; justify-content: center; align-items: center; }
.fld button svg { width: 10px; height: 12px; }
.sel::after { content: ""; position: absolute; right: 5px; top: 4px; border: 3px solid transparent; border-top: 6px solid #000; border-bottom: 0; pointer-events: none; }
.dbtns { display: flex; justify-content: center; gap: 18px; margin-top: 19px; }
.dbtns button { width: 95px; height: 22px; background: #d4d0c8; color: #333; border: 1px solid; border-color: #ece9e2 #85827c #85827c #ece9e2; }
.dbtns .ok { font-weight: bold; }
.cursor { position: absolute; left: 530px; top: 307px; width: 12px; height: 20px; }
```
